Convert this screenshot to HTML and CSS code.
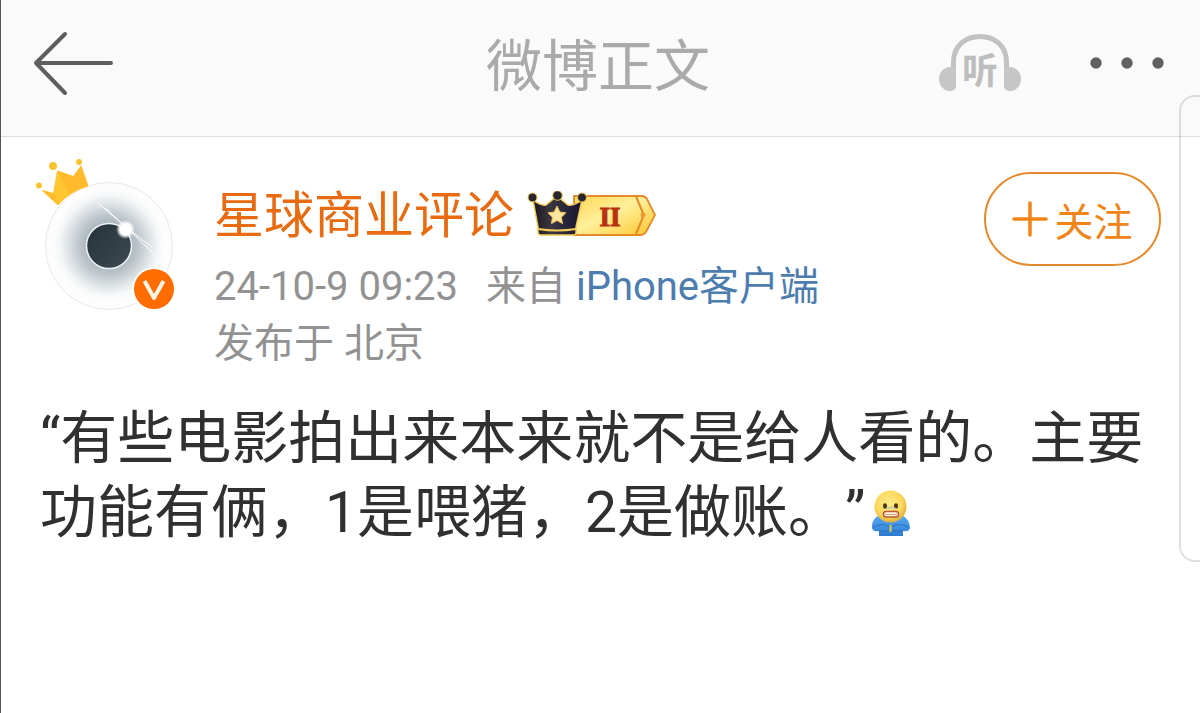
FILE: index.html
```html
<!DOCTYPE html>
<html lang="zh-CN">
<head>
<meta charset="utf-8">
<meta name="viewport" content="width=device-width, initial-scale=1">
<title>微博正文</title>
<link rel="stylesheet" href="styles.css">
</head>
<body>
<header class="topbar">
  <button class="icon-button back" aria-label="返回">
    <svg width="84" height="68" viewBox="0 0 84 68" fill="none" stroke="#5e5e5e" stroke-width="4" stroke-linecap="round" stroke-linejoin="round"><path d="M34 5 5 34 34 64M5 34H80"/></svg>
  </button>
  <h1 class="title">微博正文</h1>
  <div class="actions">
    <button class="icon-button" aria-label="听">
      <svg width="82" height="60" viewBox="0 0 82 60">
        <path d="M14.500 54V29C14.500 13 26 3.500 41 3.500S67.500 13 67.500 29V54" fill="none" stroke="#c2c2c2" stroke-width="5"/>
        <path d="M17 34V54Q16 58 11 58A11 12 0 0 1 11 34ZM65 34V54Q66 58 71 58A11 12 0 0 0 71 34Z" fill="#c6c6c6"/>
        <text class="listen-text" x="41" y="51" text-anchor="middle">听</text>
      </svg>
    </button>
    <button class="icon-button" aria-label="更多">
      <svg width="76" height="14" viewBox="0 0 76 14" fill="#606060"><circle cx="7" cy="7" r="5.700"/><circle cx="38" cy="7" r="5.700"/><circle cx="69" cy="7" r="5.700"/></svg>
    </button>
  </div>
</header>
<main class="post">
  <section class="author">
    <svg class="avatar" width="144" height="160" viewBox="32 154 144 160" role="img" aria-label="头像">
      <defs>
        <radialGradient id="halo"><stop offset="0.350" stop-color="#a9b4bb"/><stop offset="0.500" stop-color="#b9c2c8"/><stop offset="0.700" stop-color="#d8dee1"/><stop offset="0.880" stop-color="#f4f6f7"/><stop offset="1" stop-color="#fdfdfd"/></radialGradient>
        <radialGradient id="glow"><stop offset="0.600" stop-color="#fff"/><stop offset="1" stop-color="#fff" stop-opacity="0"/></radialGradient>
        <linearGradient id="pupil" x1="0" y1="0" x2="1" y2="1"><stop stop-color="#25323a"/><stop offset="1" stop-color="#3d4a52"/></linearGradient>
      </defs>
      <circle cx="109" cy="246" r="63.500" fill="#fdfdfd" stroke="#e8e8e8"/>
      <circle cx="109" cy="245" r="56" fill="url(#halo)"/>
      <circle cx="109" cy="246" r="22.500" fill="url(#pupil)" stroke="#f0f3f5" stroke-width="1.500"/>
      <path d="M98 203 126 227 155 255M105 208 126 227 153 248" stroke="#fff" stroke-width="1" fill="none"/>
      <circle cx="125.500" cy="229.500" r="9.500" fill="url(#glow)"/>
      <path d="M42.500 190.500 53.500 193.500 57.500 171 73.500 176.500 81 166 88 186Q70 191 58 205Z" fill="#ffc62f" stroke="#ffc62f" stroke-width="1" stroke-linejoin="round"/>
      <path d="M57.500 171 73.500 176.500 79 189 69 194ZM42.500 190.500 53.500 193.500 58 205ZM73.500 176.500 81 166 88 186 79 189Z" fill="#ffbb2c"/>
      <g fill="#f9c230"><circle cx="39" cy="185.500" r="3"/><circle cx="53" cy="166" r="4"/><circle cx="79" cy="162" r="3"/></g>
      <circle cx="154" cy="289" r="22" fill="#fff"/><circle cx="154" cy="289" r="20" fill="#ff6d00"/>
      <path d="m144.500 281 9.500 17 9.500-17" fill="none" stroke="#fff5e6" stroke-width="4" stroke-linejoin="round"/>
    </svg>
    <div class="details">
      <div class="name-row">
        <a class="name" href="#">星球商业评论</a>
        <svg class="level" width="132" height="50" viewBox="526 190 132 50" role="img" aria-label="会员 II">
          <defs>
            <linearGradient id="gold" x1="0" y1="0" x2="1" y2="1"><stop stop-color="#ffd754"/><stop offset="0.450" stop-color="#fff09a"/><stop offset="1" stop-color="#ffc52b"/></linearGradient>
            <linearGradient id="dark"><stop stop-color="#17151d"/><stop offset="0.350" stop-color="#3a3741"/><stop offset="1" stop-color="#171334"/></linearGradient>
          </defs>
          <path d="M574 195H642Q645 195 647 198L655 214 646 231Q644 234 640 234H574Z" fill="url(#gold)" stroke="#e58a2c" stroke-width="1.800"/>
          <path d="M636 195.500 643 212Q644 214 643 216L636 233" fill="none" stroke="#e58a2c" stroke-width="2"/><circle cx="643" cy="214" r="2.500" fill="#e99a32"/>
          <text class="level-text" x="610" y="225" text-anchor="middle">II</text>
          <path d="M533 199Q541 205 546 204L557 195 568 204Q574 205 582 199L576 226V232Q576 234 573 234H541Q538 234 538 231V226Z" fill="url(#dark)" stroke="#f4ca56" stroke-width="1.500"/>
          <path d="M538 228Q557 231 576 228" stroke="#f4ca56" stroke-width="2" fill="none"/>
          <g fill="#292630" stroke="#f4ca56" stroke-width="1"><circle cx="532.500" cy="196.500" r="4.500"/><circle cx="557.500" cy="194.500" r="4.800"/><circle cx="582" cy="196.500" r="4.500"/></g>
          <path d="m557 205 2.800 6 6 .8-4.500 4.500 1.200 6.200-5.500-3-5.500 3 1-6.200-4.500-4.500 6.200-.8Z" fill="#ffe6a0" stroke="#f5c35a"/>
        </svg>
      </div>
      <p class="meta"><time>24-10-9 09:23</time><span class="source">来自 <a href="#">iPhone客户端</a></span></p>
      <p class="meta">发布于 北京</p>
    </div>
    <button class="follow"><svg width="36" height="36" viewBox="0 0 36 36" fill="none" stroke="#f08416" stroke-width="3.500" stroke-linecap="round" aria-hidden="true"><path d="M2 18H34M18 2V34"/></svg>关注</button>
  </section>
  <p class="content">“有些电影拍出来本来就不是给人看的。主要功能有俩，1是喂猪，2是做账。”<svg class="emoji" width="40" height="48" viewBox="0 0 40 48" role="img" aria-label="表情">
    <defs><radialGradient id="face" cx=".45" cy=".4" r=".6"><stop stop-color="#ffe98a"/><stop offset=".7" stop-color="#fbd85a"/><stop offset="1" stop-color="#e3ae38"/></radialGradient><linearGradient id="coat" x2="0" y2="1"><stop stop-color="#5aaaf4"/><stop offset="1" stop-color="#2d7bd2"/></linearGradient></defs>
    <path d="M8 26Q0 31 1 39 2 43 8 42V47H32V42Q38 43 39 39 39 31 31 26Z" fill="url(#coat)"/>
    <path d="M3 38Q11 33 19 38 29 33 37 38M8 42H32" fill="none" stroke="#2b70b9"/>
    <circle cx="19.500" cy="17.500" r="16" fill="url(#face)"/>
    <g fill="#4b3518"><ellipse cx="14" cy="17" rx="2" ry="2.800"/><ellipse cx="25" cy="17" rx="2" ry="2.800"/></g>
    <path d="M15 20Q20 17 25 20" stroke="#c3cf9d" stroke-width="2" fill="none"/>
    <rect x="12.500" y="22.500" width="15" height="5.500" rx="2.500" fill="#fff5df" stroke="#b85a36" stroke-width="1.500"/><path d="M14 25.500H26" stroke="#c77a54" stroke-width=".7"/>
    <path d="M19.500 36V43" stroke="#e2c94b" stroke-width="2"/>
  </svg></p>
</main>
<aside class="edge-panel" aria-hidden="true"></aside>
</body>
</html>
```

FILE: styles.css
```css
* { box-sizing: border-box; }
body {
  position: relative;
  margin: 0;
  min-height: 100vh;
  border-left: 1px solid #555;
  background: #fff;
  color: #303030;
  font-family: Roboto, "Noto Sans CJK SC", sans-serif;
  overflow-x: hidden;
}
button { font: inherit; cursor: pointer; }
a { color: inherit; text-decoration: none; }
svg { display: block; flex-shrink: 0; }
.topbar {
  display: grid;
  grid-template-columns: 1fr auto 1fr;
  align-items: center;
  height: 137px;
  padding: 0 35px 10px 30px;
  border-bottom: 1px solid #dcdcdc;
  background: #fafafa;
}
.icon-button { padding: 0; border: 0; background: none; }
.back { justify-self: start; }
.title {
  margin: 0;
  padding-top: 8px;
  color: #aaa;
  font-size: 56px;
  font-weight: 400;
  line-height: 80px;
}
.actions { display: flex; align-items: center; justify-content: flex-end; gap: 68px; }
.listen-text { fill: #bdbdbd; font-family: "Noto Sans CJK SC", sans-serif; font-size: 36px; font-weight: 700; }
.post { padding: 17px 39px 0 31px; }
.author { display: flex; align-items: flex-start; }
.details { flex: 1; padding-top: 30px; margin-left: 38px; }
.name-row { display: flex; align-items: center; gap: 12px; height: 64px; margin-bottom: 10px; }
.name { color: #e86b12; font-size: 50px; line-height: 64px; }
.meta { margin: 0; color: #929292; font-size: 40px; line-height: 57px; }
.source { margin-left: 28px; }
.source a { color: #4d7cae; }
.follow {
  display: flex;
  align-items: center;
  justify-content: center;
  gap: 6px;
  width: 177px;
  height: 94px;
  margin-top: 18px;
  padding: 0;
  border: 2px solid #e58a2c;
  border-radius: 47px;
  background: #fff;
  color: #f08416;
  font-size: 39px;
}
.content {
  margin: 30px -10px 0 8px;
  font-size: 57px;
  line-height: 74px;
  text-spacing-trim: space-all;
}
.emoji { display: inline-block; margin-left: 6px; vertical-align: -5px; }
.level-text { fill: #b83210; stroke: #b83210; font-family: "Liberation Serif", serif; font-size: 27px; font-weight: 700; }
.edge-panel {
  position: absolute;
  top: 95px;
  right: -2px;
  width: 23px;
  height: 467px;
  border: 2px solid rgba(0, 0, 0, 0.12);
  border-right: 0;
  border-radius: 16px 0 0 16px;
}
```
